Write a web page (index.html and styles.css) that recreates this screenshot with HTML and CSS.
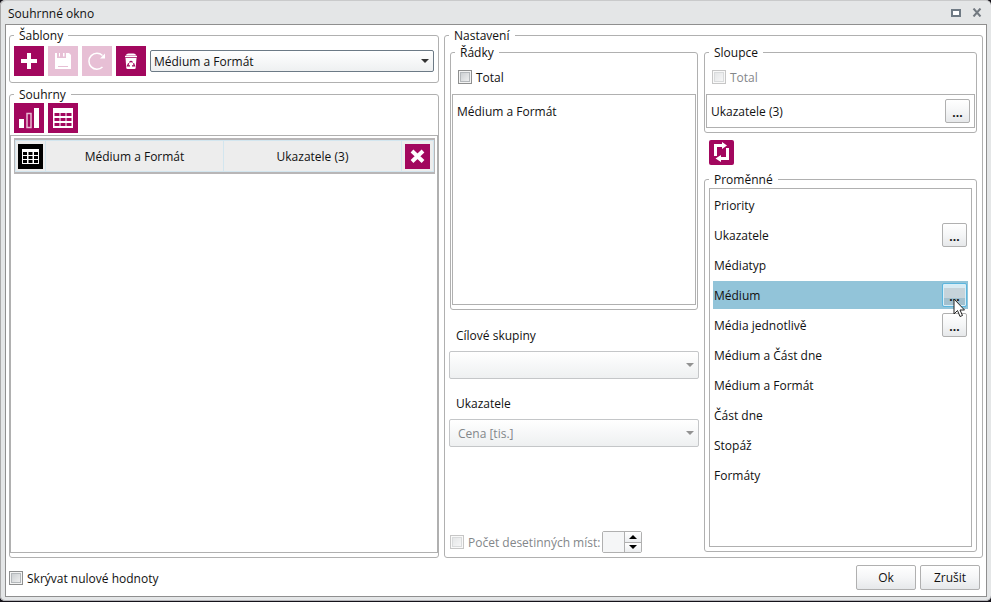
FILE: index.html
```html
<!DOCTYPE html>
<html lang="cs">
<head>
<meta charset="utf-8">
<title>Souhrnné okno</title>
<link rel="stylesheet" href="styles.css">
</head>
<body>
<div class="window">
  <header class="titlebar">
    <h1 class="title">Souhrnné okno</h1>
    <button class="win-btn" type="button" aria-label="Maximalizovat"><svg width="10" height="8" viewBox="0 0 10 8"><rect x="1" y="1" width="8" height="6" fill="#fff" stroke="#6f7a84" stroke-width="2"/></svg></button>
    <button class="win-btn" type="button" aria-label="Zavřít"><svg width="10" height="9" viewBox="0 0 10 9"><path d="M1.500 .5l7 8M8.500 .5l-7 8" stroke="#727980" stroke-width="2"/></svg></button>
  </header>

  <form class="panel">
    <main class="columns">
      <div class="left">
        <fieldset class="group templates">
          <legend>Šablony</legend>
          <div class="toolbar">
            <button class="tool" type="button" aria-label="Přidat"><svg width="30" height="30" viewBox="0 0 30 30"><path d="M15 7v16M7 15h16" stroke="#fff" stroke-width="4"/></svg></button>
            <button class="tool" type="button" aria-label="Uložit" disabled><svg width="30" height="30" viewBox="0 0 30 30"><path d="M7 7h2v5h9V7h3l2 2v14H7z" fill="#fff"/><path d="M11 7h1v3.500h-1zM15 7h1.500v3.500H15z" fill="#fff"/><path d="M10 20.500h10" stroke="#e7bfd5"/></svg></button>
            <button class="tool" type="button" aria-label="Obnovit" disabled><svg width="30" height="30" viewBox="0 0 30 30"><path d="M20.500 21A8 8 0 1 1 20.500 9.500" fill="none" stroke="#fff" stroke-width="1.500"/><path d="M23 7.500v5h-5z" fill="#fff"/></svg></button>
            <button class="tool" type="button" aria-label="Smazat"><svg width="30" height="30" viewBox="0 0 30 30"><path d="M10 9.500q0-2 2.500-2h5q2.500 0 2.500 2z" fill="#fff"/><path d="M9 10.500h12" stroke="#fff" stroke-width="1.500"/><path d="M9.500 12h11l-.8 10q-.1 1-1.200 1h-7q-1.100 0-1.200-1z" fill="#fff"/><path d="M13.500 16.500q1.500-2.300 3 0M17.500 17.300l1 2.500h-2.500M14 19.800h-2.500l1.200-2.500" fill="none" stroke="#a2075e" stroke-width="1.300"/></svg></button>
            <div class="combo template-combo">
              <select aria-label="Šablona"><option>Médium a Formát</option></select>
              <svg class="arrow" width="8" height="4" viewBox="0 0 8 4"><path d="M0 0h8L4 4z"/></svg>
            </div>
          </div>
        </fieldset>

        <fieldset class="group summaries">
          <legend>Souhrny</legend>
          <div class="toolbar">
            <button class="tool" type="button" aria-label="Graf"><svg width="30" height="30" viewBox="0 0 30 30"><path d="M5 16h5v9H5zM20 5h5v20h-5z" fill="#fff"/><path d="M13 10.500h4v14h-4z" fill="none" stroke="#e9bcd4" stroke-width="1.500"/></svg></button>
            <button class="tool" type="button" aria-label="Tabulka"><svg width="30" height="30" viewBox="0 0 30 30"><path d="M5 5h20v20H5z" fill="#fff"/><path d="M6.500 10h5v3h-5zM12.500 10h5v3h-5zM18.500 10h5v3h-5zM6.500 15h5v3h-5zM12.500 15h5v3h-5zM18.500 15h5v3h-5zM6.500 20h5v3h-5zM12.500 20h5v3h-5zM18.500 20h5v3h-5z" fill="#a2075e"/></svg></button>
          </div>
          <div class="summary-list">
            <div class="summary">
              <span class="cell"><svg width="25" height="25" viewBox="0 0 25 25"><path d="M0 0h25v25H0z"/><path d="M4 5h17v15H4z" fill="#fff"/><path d="M5 8h4v3H5zM10.500 8h4v3h-4zM16 8h4v3h-4zM5 12h4v3H5zM10.500 12h4v3h-4zM16 12h4v3h-4zM5 16h4v3H5zM10.500 16h4v3h-4zM16 16h4v3h-4z"/></svg></span>
              <span class="cell name">Médium a Formát</span>
              <span class="cell name">Ukazatele (3)</span>
              <span class="cell"><button class="tool remove" type="button" aria-label="Odebrat"><svg width="25" height="25" viewBox="0 0 25 25"><path d="M7 7l11 10.500M18 7L7 17.500" stroke="#fff" stroke-width="4"/></svg></button></span>
            </div>
          </div>
        </fieldset>
      </div>

      <fieldset class="group settings">
        <legend>Nastavení</legend>
        <div class="settings-grid">
          <div class="rows-side">
            <fieldset class="group axis">
              <legend>Řádky</legend>
              <label class="check"><input type="checkbox"><span>Total</span></label>
              <ul class="list rows-list"><li class="item">Médium a Formát</li></ul>
            </fieldset>
            <label class="caption" for="targets">Cílové skupiny</label>
            <div class="combo tall">
              <select id="targets" disabled><option></option></select>
              <svg class="arrow" width="8" height="4" viewBox="0 0 8 4"><path d="M0 0h8L4 4z"/></svg>
            </div>
            <label class="caption" for="metrics">Ukazatele</label>
            <div class="combo tall">
              <select id="metrics" disabled><option>Cena [tis.]</option></select>
              <svg class="arrow" width="8" height="4" viewBox="0 0 8 4"><path d="M0 0h8L4 4z"/></svg>
            </div>
            <div class="decimals">
              <label class="check off"><input type="checkbox" disabled><span>Počet desetinných míst:</span></label>
              <div class="spinner">
                <input type="text" aria-label="Počet desetinných míst" disabled>
                <div class="steps">
                  <button type="button" aria-label="Více"><svg width="8" height="4" viewBox="0 0 8 4"><path d="M0 4h8L4 0z"/></svg></button>
                  <button type="button" aria-label="Méně"><svg width="8" height="4" viewBox="0 0 8 4"><path d="M0 0h8L4 4z"/></svg></button>
                </div>
              </div>
            </div>
          </div>

          <div class="cols-side">
            <fieldset class="group axis">
              <legend>Sloupce</legend>
              <label class="check off"><input type="checkbox" disabled><span>Total</span></label>
              <ul class="list"><li class="item">Ukazatele (3)<button class="btn more" type="button">...</button></li></ul>
            </fieldset>
            <button class="tool swap" type="button" aria-label="Prohodit"><svg width="25" height="25" viewBox="0 0 25 25"><path d="M6.500 16V5.500H14M18.500 8v10.500H11" fill="none" stroke="#fff" stroke-width="3"/><path d="M13 2l5 3.500L13 9zM12 15v7l-5.500-3.500z" fill="#fff"/></svg></button>
            <fieldset class="group variables">
              <legend>Proměnné</legend>
              <ul class="list variable-list">
                <li class="item">Priority</li>
                <li class="item">Ukazatele<button class="btn more" type="button">...</button></li>
                <li class="item">Médiatyp</li>
                <li class="item selected">Médium<button class="btn more hot" type="button">...</button>
                  <svg class="pointer" width="13" height="20" viewBox="0 0 13 20"><path d="M1 1v15l3.500-3.500L7 18.500l2.500-1L7 12h4.500z" fill="#fff" stroke="#222"/></svg></li>
                <li class="item">Média jednotlivě<button class="btn more" type="button">...</button></li>
                <li class="item">Médium a Část dne</li>
                <li class="item">Médium a Formát</li>
                <li class="item">Část dne</li>
                <li class="item">Stopáž</li>
                <li class="item">Formáty</li>
              </ul>
            </fieldset>
          </div>
        </div>
      </fieldset>
    </main>

    <footer class="footer">
      <label class="check"><input type="checkbox"><span>Skrývat nulové hodnoty</span></label>
      <button class="btn wide" type="button">Ok</button>
      <button class="btn wide" type="button">Zrušit</button>
    </footer>
  </form>
</div>
</body>
</html>
```
FILE: styles.css
```css
* { box-sizing: border-box; }

body {
  margin: 0;
  height: 100vh;
  padding-bottom: 1px;
  background: #15131a;
  color: #111;
  font: 12px/16px "Open Sans", "Noto Sans", sans-serif;
}

button, input, select { font: inherit; color: inherit; margin: 0; }
button { padding: 0; }
svg { display: block; }

.window {
  display: flex;
  flex-direction: column;
  height: 100%;
  padding: 0 4px 4px 5px;
  background: #e4e6e7;
  border-top: 1px solid #c9cacb;
  border-radius: 5px;
  box-shadow: inset 0 -1px #b4b4b8, inset 1px 0 #a9a9a9;
}

.titlebar {
  display: flex;
  align-items: center;
  height: 23px;
  padding: 0 5px 0 3px;
  gap: 11px;
}
.title { flex: 1; margin: 0; padding-top: 2px; font-size: 12px; font-weight: 400; }
.win-btn { border: 0; background: none; }

.panel {
  flex: 1;
  min-height: 0;
  display: flex;
  flex-direction: column;
  padding: 2px 3px 6px;
  background: #fff;
  border: 1px solid #8f8f8f;
}

.columns {
  flex: 1;
  min-height: 0;
  display: grid;
  grid-template-columns: 430fr 539fr;
  gap: 5px;
}

.left { display: flex; flex-direction: column; gap: 3px; min-width: 0; }

.group {
  min-width: 0;
  margin: 0;
  padding: 0;
  border: 1px solid #b0b0b0;
  border-radius: 3px;
}
.group > legend { height: 16px; padding: 0 5px; line-height: 18px; }
.summaries > legend { margin-left: 4px; }
.axis > legend { margin-left: 3px; }

.templates { padding: 3px 4px 6px; }
.toolbar { display: flex; align-items: center; gap: 4px; }

.tool {
  flex: none;
  border: 0;
  background: #a2075e;
}
.tool:disabled { background: #e7bfd5; }

.combo { position: relative; height: 22px; }
.combo select {
  appearance: none;
  display: block;
  width: 100%;
  height: 100%;
  padding: 2px 20px 0 3px;
  border: 1px solid #6c7a86;
  border-radius: 2px;
  background: linear-gradient(#fff, #eef0f1);
}
.combo .arrow { position: absolute; right: 5px; top: 50%; margin-top: -2px; fill: #333; }
.template-combo { flex: 1; }
.tall { height: 28px; }
.tall select { padding-left: 8px; }
.tall select:disabled { border-color: #c4c6c8; color: #83878a; opacity: 1; }
.tall .arrow { fill: #929292; }

.summaries { flex: 1; display: flex; flex-direction: column; padding: 1px 0 4px; }
.summaries .toolbar { padding: 0 4px; }
.summary-list {
  flex: 1;
  margin-top: 2px;
  padding: 2px 2px 2px 3px;
  border: 1px solid #b0b0b0;
}
.summary {
  display: grid;
  grid-template-columns: 31px 1fr 1fr 32px;
  height: 36px;
  border: 2px solid #b8b6b7;
  border-width: 2px 1px;
  background: #ededed;
}
.cell {
  display: flex;
  align-items: center;
  justify-content: center;
  border: 1px solid #d3e6ef;
  border-left-width: 0;
}
.cell:first-child { border-left-width: 1px; }
.name { padding-top: 2px; }

.settings { padding: 1px 5px 4px 4px; display: flex; }
.settings-grid {
  flex: 1;
  min-width: 0;
  display: grid;
  grid-template-columns: 250fr 273fr;
  gap: 5px;
}
.rows-side, .cols-side { display: flex; flex-direction: column; min-width: 0; }
.rows-side .axis { margin: 0 1px; }

.axis { padding: 0 1px 4px; }
.check { display: flex; align-items: center; gap: 4px; }
.check span { padding-top: 2px; }
.axis .check { height: 34px; padding-left: 6px; }
.off { color: #83878a; }

.check input {
  appearance: none;
  flex: none;
  width: 14px;
  height: 14px;
  border: 1px solid #8e8f8f;
  background: linear-gradient(135deg, #c4c8cb, #f6f6f6);
  box-shadow: inset 0 0 0 1px #f4f4f4, inset 0 0 0 2px #b4b8bb;
}
.check input:disabled { opacity: .5; }

.list {
  margin: 0;
  padding: 2px 3px;
  list-style: none;
  border: 1px solid #b0b0b0;
}
.item {
  position: relative;
  display: flex;
  align-items: center;
  justify-content: space-between;
  height: 28px;
  padding: 2px 1px 0;
}
.rows-list { height: 211px; }

.btn {
  border: 1px solid #b0b0b0;
  border-radius: 2px;
  background: linear-gradient(#fff, #f5f6f7 50%, #e6e8ea);
}
.more { width: 25px; height: 24px; margin-top: -2px; padding-top: 3px; font-weight: 700; }
.hot {
  border-color: #5cb5dd;
  background: linear-gradient(#d9ebf3 0 20%, #c6d3da 20% 65%, #a3c0ce 65%);
  box-shadow: inset 0 0 0 1px #d8eef8;
}
.pointer { position: absolute; left: calc(100% - 15px); top: 17px; z-index: 1; }

.caption { margin: 18px 7px 7px; }
.caption ~ .caption { margin-top: 17px; }

.decimals {
  display: flex;
  align-items: center;
  gap: 2px;
  margin-top: auto;
  padding-left: 1px;
}
.spinner { display: flex; width: 40px; height: 22px; border: 1px solid #b0b0b0; border-radius: 2px; }
.spinner input { flex: 1; min-width: 0; padding: 0 2px; border: 0; background: #f5f6f7; }
.steps { display: grid; width: 17px; border-left: 1px solid #b0b0b0; }
.steps button {
  display: grid;
  place-items: center;
  border: 0;
  background: linear-gradient(#fff, #eceef0);
}
.steps button + button { border-top: 1px solid #b0b0b0; }

.swap { align-self: flex-start; margin: 7px 5px 6px; border-radius: 2px; }

.variables { flex: 1; display: flex; flex-direction: column; margin-bottom: 1px; padding: 1px 4px 4px; }
.variable-list { flex: 1; display: flex; flex-direction: column; gap: 2px; padding: 2px 3px; }
.selected { background: #92c4d9; }

.footer { display: flex; align-items: center; gap: 4px; padding: 7px 3px 0 0; }
.footer .check { flex: 1; }
.wide { width: 60px; height: 25px; }
```
